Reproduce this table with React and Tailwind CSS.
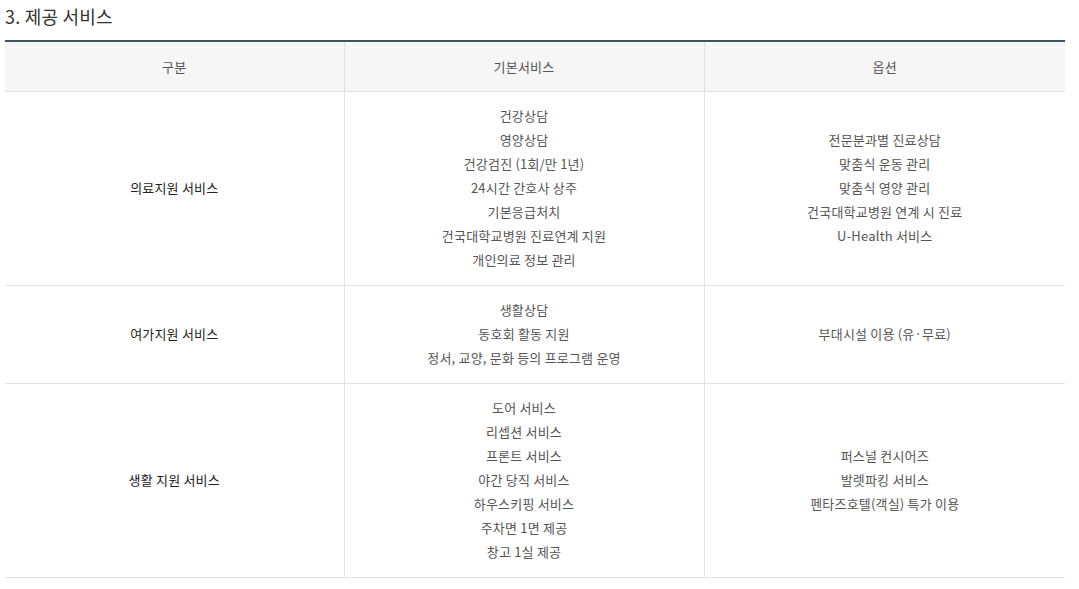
const rows = [
  {
    label: '의료지원 서비스',
    basic: ['건강상담', '영양상담', '건강검진 (1회/만 1년)', '24시간 간호사 상주', '기본응급처치', '건국대학교병원 진료연계 지원', '개인의료 정보 관리'],
    option: ['전문분과별 진료상담', '맞춤식 운동 관리', '맞춤식 영양 관리', '건국대학교병원 연계 시 진료', 'U-Health 서비스'],
  },
  {
    label: '여가지원 서비스',
    basic: ['생활상담', '동호회 활동 지원', '정서, 교양, 문화 등의 프로그램 운영'],
    option: ['부대시설 이용 (유·무료)'],
  },
  {
    label: '생활 지원 서비스',
    basic: ['도어 서비스', '리셉션 서비스', '프론트 서비스', '야간 당직 서비스', '하우스키핑 서비스', '주차면 1면 제공', '창고 1실 제공'],
    option: ['퍼스널 컨시어즈', '발렛파킹 서비스', '펜타즈호텔(객실) 특가 이용'],
  },
];

const Lines = ({ items }) => (
  <div className="flex flex-col">
    {items.map((t, i) => (
      <span key={i} className="leading-[24px]">{t}</span>
    ))}
  </div>
);

export default function App() {
  return (
    <div className="bg-white w-[1079px] h-[589px] px-[5px] pt-[4px] text-[#555] font-['Noto_Sans_CJK_KR','Noto_Sans',sans-serif]">
      <h2 className="text-[18px] leading-[24px] text-[#333] tracking-[0.2px]">3. 제공 서비스</h2>
      <table className="mt-[12px] w-[1060px] border-collapse border-t-2 border-t-[#3a5663] text-[13px] tracking-[0.2px] table-fixed">
        <colgroup>
          <col className="w-[339px]" />
          <col className="w-[360px]" />
          <col className="w-[361px]" />
        </colgroup>
        <thead>
          <tr className="bg-[#f6f6f6] h-[50px]">
            <th className="font-normal border-b border-[#e2e2e2] border-r">구분</th>
            <th className="font-normal border-b border-[#e2e2e2] border-r">기본서비스</th>
            <th className="font-normal border-b border-[#e2e2e2]">옵션</th>
          </tr>
        </thead>
        <tbody>
          {rows.map((r) => (
            <tr key={r.label} className="border-b border-[#e2e2e2] text-center">
              <td className="border-r border-[#e2e2e2] text-[#222]">{r.label}</td>
              <td className="border-r border-[#e2e2e2] py-[12.5px]">
                <Lines items={r.basic} />
              </td>
              <td className="py-[12.5px]">
                <Lines items={r.option} />
              </td>
            </tr>
          ))}
        </tbody>
      </table>
    </div>
  );
}
